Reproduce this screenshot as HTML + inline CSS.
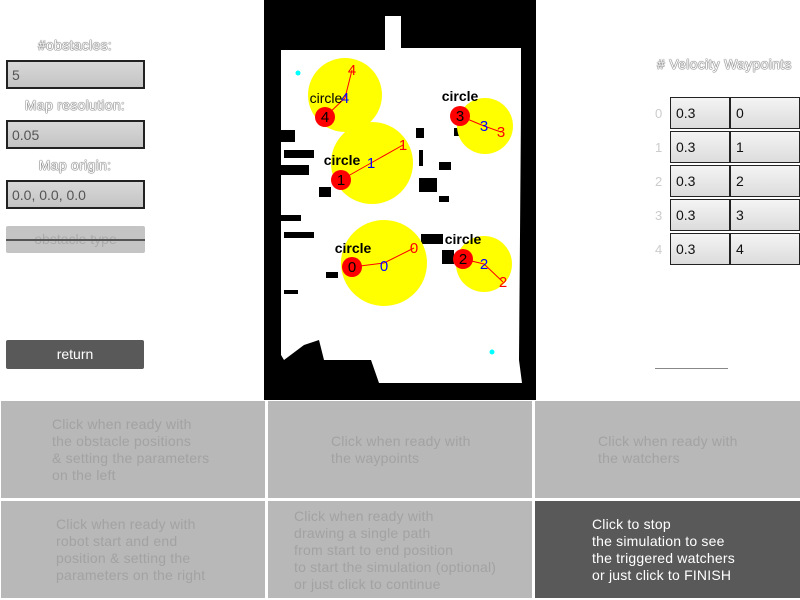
<!DOCTYPE html>
<html><head><meta charset="utf-8">
<style>
*{margin:0;padding:0;box-sizing:border-box}
body{width:800px;height:600px;background:#fff;position:relative;overflow:hidden;font-family:"Liberation Sans",sans-serif}
.lbl{position:absolute;color:#fff;font-size:14px;text-align:center;text-shadow:0 0 1px #555,0 0 1px #555,0 0 1px #555;width:150px;left:0;letter-spacing:0.3px}
.inp{position:absolute;left:6px;width:139px;height:29px;background:linear-gradient(#d8d8d8,#c4c4c4);border:2px solid #222;color:#555;font-size:14px;padding:5px 4px}
.btn{position:absolute;background:#b8b8b8;color:#a2a2a2;font-size:14px;line-height:17px;letter-spacing:0.2px}
.btn div{position:absolute}
.cell{position:absolute;height:32px;background:linear-gradient(#f4f4f4,#dcdcdc);border:1px solid #222;font-size:14px;padding:7px 5px;color:#111}
.idx{position:absolute;left:655px;color:#ccc;font-size:13px}
</style></head><body>
<div class="lbl" style="top:37px">#obstacles:</div>
<div class="inp" style="top:60px">5</div>
<div class="lbl" style="top:97px">Map resolution:</div>
<div class="inp" style="top:120px">0.05</div>
<div class="lbl" style="top:157px">Map origin:</div>
<div class="inp" style="top:180px">0.0, 0.0, 0.0</div>
<div style="position:absolute;left:6px;top:226px;width:139px;height:27px;background:#c4c4c4;border-radius:2px;color:#aaa;font-size:14px;text-align:center;line-height:27px">obstacle type</div>
<div style="position:absolute;left:6px;top:239px;width:139px;height:2px;background:#555"></div>
<div style="position:absolute;left:6px;top:340px;width:138px;height:29px;background:#595959;color:#fff;font-size:14px;text-align:center;line-height:29px;border-radius:2px">return</div>

<svg style="position:absolute;left:264px;top:0" width="272" height="400">
<rect width="272" height="400" fill="#000"/>
<path d="M17,50 H121 V16 H137 V48 H257 V110 L255,360 L258,383 H115 L107,360 H60 L55,340 L40,345 L20,360 L17,355 Z" fill="#fff"/>
<g fill="#000"><rect x="17" y="130" width="14" height="12"/><rect x="20" y="150" width="30" height="8"/><rect x="17" y="165" width="28" height="10"/><rect x="55" y="187" width="12" height="10"/><rect x="17" y="215" width="20" height="6"/><rect x="20" y="232" width="30" height="6"/><rect x="20" y="290" width="14" height="4"/><rect x="190" y="128" width="10" height="8"/><rect x="175" y="162" width="12" height="8"/><rect x="155" y="178" width="18" height="14"/><rect x="175" y="196" width="10" height="6"/><rect x="157" y="234" width="22" height="10"/><rect x="178" y="250" width="12" height="14"/><rect x="152" y="128" width="8" height="10"/><rect x="155" y="150" width="4" height="16"/><rect x="62" y="272" width="12" height="6"/></g>
<g fill="#ff0">
<circle cx="81" cy="95" r="37"/><circle cx="108" cy="163" r="41"/><circle cx="221" cy="126" r="28"/><circle cx="120" cy="263" r="43"/><circle cx="220" cy="264" r="28"/></g>
<g stroke="#f00" fill="none" stroke-width="1">
<polyline points="61,117 81,98 88,70"/><polyline points="77,180 107,163 139,145"/><polyline points="196,116 220,126 237,132"/><polyline points="88,267 120,263 150,248"/><polyline points="199,259 220,264 239,282"/></g>
<g fill="#f00"><circle cx="61" cy="117" r="10"/><circle cx="77" cy="180" r="10"/><circle cx="196" cy="116" r="10"/><circle cx="88" cy="267" r="10"/><circle cx="199" cy="259" r="10"/></g>
<g font-family="Liberation Sans" font-size="15" text-anchor="middle">
<g fill="#000"><text x="61" y="122">4</text><text x="77" y="185">1</text><text x="196" y="121">3</text><text x="88" y="272">0</text><text x="199" y="264">2</text></g>
<g fill="#f00"><text x="88" y="75">4</text><text x="139" y="150">1</text><text x="237" y="137">3</text><text x="150" y="253">0</text><text x="239" y="287">2</text></g>
<g fill="#00f"><text x="81" y="103">4</text><text x="107" y="168">1</text><text x="220" y="131">3</text><text x="120" y="271">0</text><text x="220" y="269">2</text></g>
<g fill="#000" font-size="14" font-weight="bold"><text x="62" y="103" font-weight="normal">circle</text><text x="78" y="165">circle</text><text x="196" y="101">circle</text><text x="89" y="253">circle</text><text x="199" y="244">circle</text></g>
</g>
<circle cx="34" cy="73" r="2.5" fill="#0ff"/><circle cx="228" cy="352" r="2.5" fill="#0ff"/>
</svg>

<div style="position:absolute;left:657px;top:56px;color:#fff;font-size:14px;text-shadow:0 0 1px #555,0 0 1px #555,0 0 1px #555;white-space:nowrap;letter-spacing:0.3px"># Velocity Waypoints</div>
<div class="idx" style="top:106px">0</div><div class="idx" style="top:140px">1</div><div class="idx" style="top:174px">2</div><div class="idx" style="top:208px">3</div><div class="idx" style="top:242px">4</div>
<div class="cell" style="left:670px;top:97px;width:60px">0.3</div><div class="cell" style="left:730px;top:97px;width:70px">0</div>
<div class="cell" style="left:670px;top:131px;width:60px">0.3</div><div class="cell" style="left:730px;top:131px;width:70px">1</div>
<div class="cell" style="left:670px;top:165px;width:60px">0.3</div><div class="cell" style="left:730px;top:165px;width:70px">2</div>
<div class="cell" style="left:670px;top:199px;width:60px">0.3</div><div class="cell" style="left:730px;top:199px;width:70px">3</div>
<div class="cell" style="left:670px;top:233px;width:60px">0.3</div><div class="cell" style="left:730px;top:233px;width:70px">4</div>
<div style="position:absolute;left:655px;top:368px;width:73px;height:1px;background:#888"></div>

<div class="btn" style="left:1px;top:401px;width:264px;height:97px"><div style="left:51px;top:15px">Click when ready with<br>the obstacle positions<br>&amp; setting the parameters<br>on the left</div></div>
<div class="btn" style="left:268px;top:401px;width:264px;height:97px"><div style="left:63px;top:32px">Click when ready with<br>the waypoints</div></div>
<div class="btn" style="left:535px;top:401px;width:265px;height:97px"><div style="left:63px;top:32px">Click when ready with<br>the watchers</div></div>
<div class="btn" style="left:1px;top:501px;width:264px;height:97px"><div style="left:55px;top:15px">Click when ready with<br>robot start and end<br>position &amp; setting the<br>parameters on the right</div></div>
<div class="btn" style="left:268px;top:501px;width:264px;height:97px"><div style="left:26px;top:7px">Click when ready with<br>drawing a single path<br>from start to end position<br>to start the simulation (optional)<br>or just click to continue</div></div>
<div class="btn" style="left:535px;top:501px;width:265px;height:97px;background:#595959;color:#fff"><div style="left:57px;top:15px">Click to stop<br>the simulation to see<br>the triggered watchers<br>or just click to FINISH</div></div>
</body></html>
